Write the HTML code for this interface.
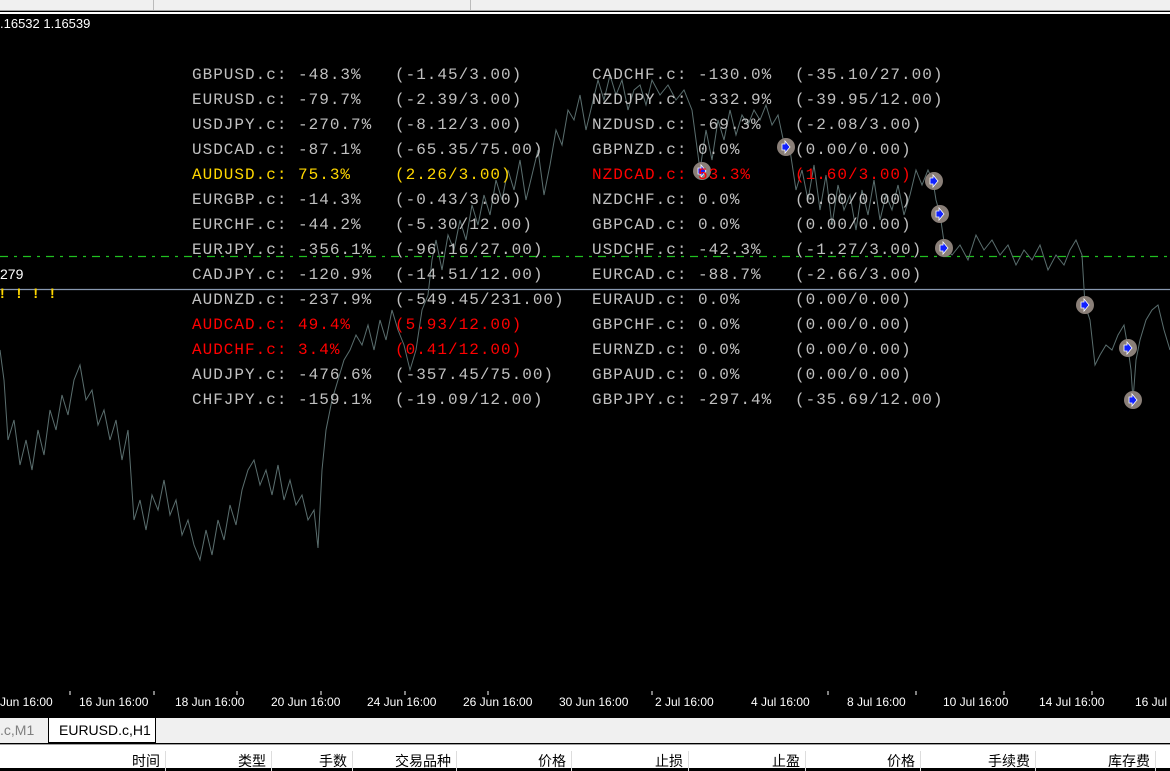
<!DOCTYPE html>
<html><head><meta charset="utf-8"><style>
*{margin:0;padding:0;box-sizing:border-box}
body{width:1170px;height:768px;overflow:hidden;background:#000;position:relative;font-family:"Liberation Sans","Noto Sans CJK SC",sans-serif}
.tb{position:absolute;left:0;top:0;width:1170px;height:11px;background:#f0f0f0;border-bottom:1px solid #a0a0a0}
.chart{position:absolute;left:0;top:12px;width:1170px;height:704px;background:#000;border-top:2px solid #fff}
.t{position:absolute;font-family:"Liberation Mono",monospace;font-size:16px;letter-spacing:1px;color:#c0c0c0;white-space:pre;line-height:25px}
.r{color:#f00}.y{color:#ffd700}
.ax{position:absolute;top:695px;font-size:12px;color:#fff;white-space:pre}
.tabs{position:absolute;left:0;top:716px;width:1170px;height:27px;background:#f0f0f0;border-top:2px solid #000}
.tab{position:absolute;top:0;height:24px;font-size:14px;line-height:24px;padding:0 10px}
.hdr{position:absolute;left:0;top:744px;width:1170px;height:24px;background:#fff;border-top:1px solid #a0a0a0}
.h{position:absolute;top:6px;font-size:14px;color:#000;text-align:right;border-right:1px solid #ddd;height:20px;padding-right:5px}
</style></head><body>
<div class="tb"><div style="position:absolute;left:153px;top:0;width:1px;height:10px;background:#bbb"></div><div style="position:absolute;left:470px;top:0;width:1px;height:10px;background:#bbb"></div></div>
<div class="chart"></div>
<div style="position:absolute;left:0;top:16px;font-size:13px;color:#fff">.16532 1.16539</div>
<svg style="position:absolute;left:0;top:0" width="1170" height="716">
<line x1="0" y1="256.5" x2="1170" y2="256.5" stroke="#20c020" stroke-width="1.3" stroke-dasharray="8,6,3,6"/>
<line x1="0" y1="289.5" x2="1170" y2="289.5" stroke="#8898b0" stroke-width="1.3"/>
<polyline fill="none" stroke="#5a6e6e" stroke-width="1" points="0,350 4,380 8,440 14,420 20,465 26,440 32,470 38,430 44,455 50,410 56,430 62,395 68,415 74,380 80,365 86,400 92,390 98,425 104,410 110,440 116,420 122,460 128,430 134,520 140,500 146,530 152,495 158,510 164,480 170,515 176,500 182,535 188,520 194,545 200,560 206,530 212,555 218,520 224,540 230,505 236,525 242,490 248,470 254,460 260,485 266,470 272,495 278,465 284,500 290,480 296,505 302,495 308,520 314,510 318,548 322,470 326,430 332,400 338,380 344,360 350,350 356,335 362,345 368,325 374,350 380,320 386,340 392,310 398,330 404,345 410,370 416,350 422,310 428,295 432,260 436,240 442,270 448,235 454,250 460,220 466,240 472,205 478,225 484,195 490,215 496,180 502,200 508,170 514,190 520,160 526,200 532,175 538,150 544,195 550,165 556,130 562,145 568,110 574,120 580,95 586,130 592,105 598,80 604,100 610,75 616,95 622,80 628,110 634,90 640,85 646,105 652,80 660,95 668,85 676,100 684,90 692,110 700,170 706,130 712,160 718,120 724,140 730,110 736,135 742,115 748,125 754,110 760,120 766,105 772,125 778,115 785,148 790,150 796,190 802,170 808,200 814,165 820,210 826,175 832,225 838,185 844,210 850,195 856,230 862,190 868,215 874,180 880,220 886,195 892,210 898,185 904,215 910,195 916,170 922,185 928,170 933,181 936,200 940,214 943,235 945,248 952,255 960,245 968,260 976,235 984,250 992,240 1000,255 1008,245 1016,265 1024,250 1032,260 1040,245 1048,270 1056,255 1064,265 1070,250 1076,240 1082,255 1085,305 1090,320 1095,365 1100,355 1106,345 1112,350 1118,335 1124,325 1128,348 1131,370 1133,400 1136,360 1140,340 1146,320 1152,310 1158,305 1164,330 1170,350"/>
<g fill="#8a7f78"><circle cx="702" cy="171" r="9"/><circle cx="786" cy="147" r="9"/><circle cx="934" cy="181" r="9"/><circle cx="940" cy="214" r="9"/><circle cx="944" cy="248" r="9"/><circle cx="1085" cy="305" r="9"/><circle cx="1128" cy="348" r="9"/><circle cx="1133" cy="400" r="9"/></g>
<g fill="#1020ff" stroke="#fff" stroke-width="0.8"><path d="M698,168h3v-3l5,6l-5,6v-3h-3z"/><path d="M782,144h3v-3l5,6l-5,6v-3h-3z"/><path d="M930,178h3v-3l5,6l-5,6v-3h-3z"/><path d="M936,211h3v-3l5,6l-5,6v-3h-3z"/><path d="M940,245h3v-3l5,6l-5,6v-3h-3z"/><path d="M1081,302h3v-3l5,6l-5,6v-3h-3z"/><path d="M1124,345h3v-3l5,6l-5,6v-3h-3z"/><path d="M1129,397h3v-3l5,6l-5,6v-3h-3z"/></g>
<g stroke="#fff"><line x1="70" y1="691" x2="70" y2="695"/><line x1="154" y1="691" x2="154" y2="695"/><line x1="237" y1="691" x2="237" y2="695"/><line x1="321" y1="691" x2="321" y2="695"/><line x1="405" y1="691" x2="405" y2="695"/><line x1="488" y1="691" x2="488" y2="695"/><line x1="652" y1="691" x2="652" y2="695"/><line x1="828" y1="691" x2="828" y2="695"/><line x1="916" y1="691" x2="916" y2="695"/><line x1="1004" y1="691" x2="1004" y2="695"/><line x1="1092" y1="691" x2="1092" y2="695"/></g>
</svg>
<div style="position:absolute;left:0;top:266px;font-size:14px;color:#fff">279</div>
<div style="position:absolute;left:0;top:285px;font-size:14px;color:#ffd700;font-weight:bold;letter-spacing:12px">!!!!</div>
<div class="t" style="left:192px;top:63px">GBPUSD.c: -48.3%
EURUSD.c: -79.7%
USDJPY.c: -270.7%
USDCAD.c: -87.1%
<span class="y">AUDUSD.c: 75.3%</span>
EURGBP.c: -14.3%
EURCHF.c: -44.2%
EURJPY.c: -356.1%
CADJPY.c: -120.9%
AUDNZD.c: -237.9%
<span class="r">AUDCAD.c: 49.4%</span>
<span class="r">AUDCHF.c: 3.4%</span>
AUDJPY.c: -476.6%
CHFJPY.c: -159.1%</div>
<div class="t" style="left:395px;top:63px">(-1.45/3.00)
(-2.39/3.00)
(-8.12/3.00)
(-65.35/75.00)
<span class="y">(2.26/3.00)</span>
(-0.43/3.00)
(-5.30/12.00)
(-96.16/27.00)
(-14.51/12.00)
(-549.45/231.00)
<span class="r">(5.93/12.00)</span>
<span class="r">(0.41/12.00)</span>
(-357.45/75.00)
(-19.09/12.00)</div>
<div class="t" style="left:592px;top:63px">CADCHF.c: -130.0%
NZDJPY.c: -332.9%
NZDUSD.c: -69.3%
GBPNZD.c: 0.0%
<span class="r">NZDCAD.c: 53.3%</span>
NZDCHF.c: 0.0%
GBPCAD.c: 0.0%
USDCHF.c: -42.3%
EURCAD.c: -88.7%
EURAUD.c: 0.0%
GBPCHF.c: 0.0%
EURNZD.c: 0.0%
GBPAUD.c: 0.0%
GBPJPY.c: -297.4%</div>
<div class="t" style="left:795px;top:63px">(-35.10/27.00)
(-39.95/12.00)
(-2.08/3.00)
(0.00/0.00)
<span class="r">(1.60/3.00)</span>
(0.00/0.00)
(0.00/0.00)
(-1.27/3.00)
(-2.66/3.00)
(0.00/0.00)
(0.00/0.00)
(0.00/0.00)
(0.00/0.00)
(-35.69/12.00)</div>
<div class="ax" style="left:0">Jun 16:00</div>
<div class="ax" style="left:79px">16 Jun 16:00</div>
<div class="ax" style="left:175px">18 Jun 16:00</div>
<div class="ax" style="left:271px">20 Jun 16:00</div>
<div class="ax" style="left:367px">24 Jun 16:00</div>
<div class="ax" style="left:463px">26 Jun 16:00</div>
<div class="ax" style="left:559px">30 Jun 16:00</div>
<div class="ax" style="left:655px">2 Jul 16:00</div>
<div class="ax" style="left:751px">4 Jul 16:00</div>
<div class="ax" style="left:847px">8 Jul 16:00</div>
<div class="ax" style="left:943px">10 Jul 16:00</div>
<div class="ax" style="left:1039px">14 Jul 16:00</div>
<div class="ax" style="left:1135px">16 Jul</div>
<div class="tabs">
<div class="tab" style="left:-10px;color:#808080">.c,M1</div>
<div class="tab" style="left:48px;width:108px;background:#fff;border:1px solid #000;border-top:none;height:25px">EURUSD.c,H1</div>
</div>
<div class="hdr">
<div class="h" style="left:0;width:166px">时间</div>
<div class="h" style="left:166px;width:106px">类型</div>
<div class="h" style="left:272px;width:81px">手数</div>
<div class="h" style="left:353px;width:104px">交易品种</div>
<div class="h" style="left:457px;width:115px">价格</div>
<div class="h" style="left:572px;width:117px">止损</div>
<div class="h" style="left:689px;width:117px">止盈</div>
<div class="h" style="left:806px;width:115px">价格</div>
<div class="h" style="left:921px;width:115px">手续费</div>
<div class="h" style="left:1036px;width:120px">库存费</div>
</div>
</body></html>
